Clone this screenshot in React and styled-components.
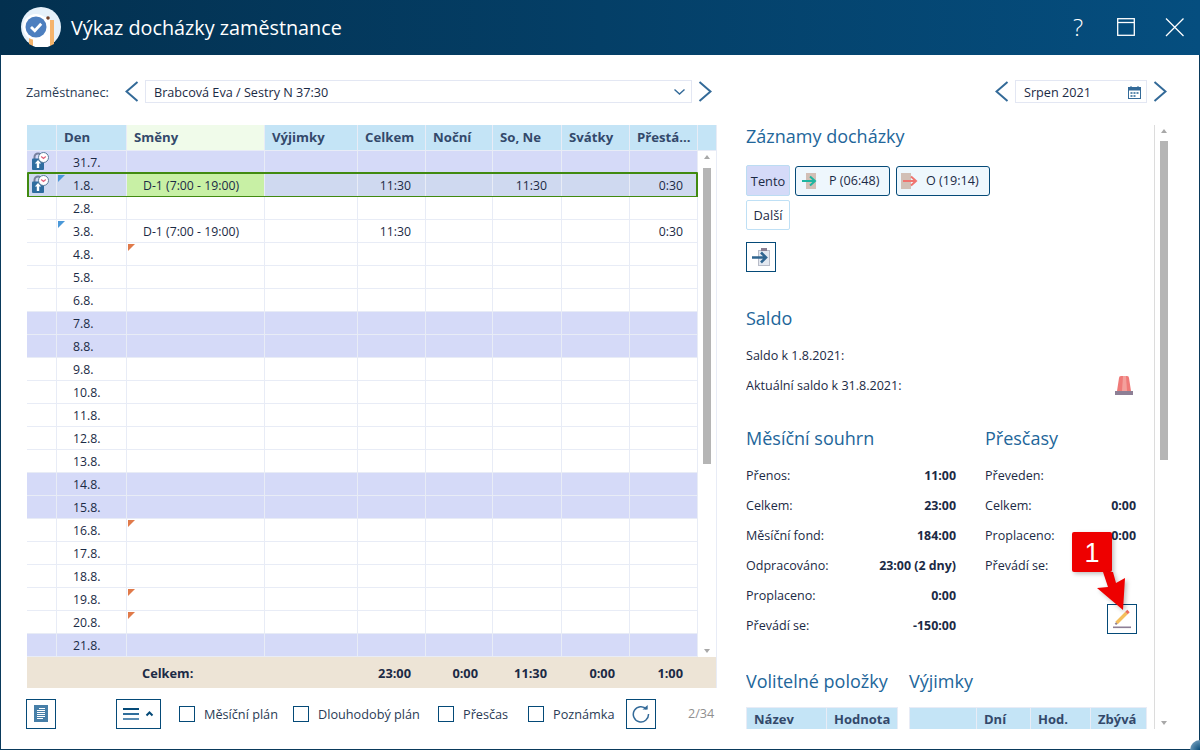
import React from 'react'
import styled, { createGlobalStyle } from 'styled-components'

const GlobalStyle = createGlobalStyle`
    html, body { margin: 0; padding: 0; background: white; }
    * { box-sizing: border-box; }
    body { font-family: "Open Sans", "Liberation Sans", sans-serif; color: #1b2a45; font-size: 12.6px; }
`;

const COLS = '30px 70px 138px 93px 68px 67px 69px 68px 68px';

const Window = styled.div`
    position: relative;
    width: 1200px;
    height: 750px;
    display: flex;
    flex-direction: column;
    overflow: hidden;
`;
const Header = styled.header`
    height: 55px;
    flex: none;
    display: flex;
    align-items: center;
    padding: 0 14px 1px 21px;
    background: linear-gradient(90deg, #03304f 0%, #054e7f 100%);
    color: white;
`;
const Title = styled.h1`
    margin: 0 auto 0 10px;
    font-size: 19.8px;
    font-weight: 400;
`;
const HeaderIcon = styled.span`
    width: 24px;
    margin-left: 24px;
    display: flex;
    justify-content: center;
    font-size: 24px;
    font-weight: 300;
    line-height: 24px;
`;
const Content = styled.main`
    flex: 1;
    display: flex;
    padding: 25px 0 0 25px;
    border: solid #0a3a5c;
    border-width: 0 1px 1px 1px;
    min-height: 0;
`;
const LeftCol = styled.section`
    width: 691px;
    flex: none;
`;
const RightCol = styled.section`
    width: 426px;
    margin-left: 29px;
    flex: none;
`;
const Toolbar = styled.div`
    height: 23px;
    margin-bottom: 22px;
    display: flex;
    align-items: center;
    justify-content: ${p => p.$end ? 'flex-end' : 'flex-start'};
    padding-right: 4px;
`;
const FieldLabel = styled.span`
    width: 98px;
    color: #2a3b55;
    font-size: 12.7px;
`;
const NavButton = styled.span`
    width: 16px;
    height: 23px;
    flex: none;
    display: flex;
    align-items: center;
    justify-content: center;
    margin: ${p => p.$margin || '0'};
`;
const Select = styled.div`
    flex: ${p => p.$width ? 'none' : '1'};
    width: ${p => p.$width ? p.$width + 'px' : 'auto'};
    height: 23px;
    display: flex;
    align-items: center;
    justify-content: space-between;
    margin-left: 5px;
    padding: 1px 5px 0 8px;
    border: 1px solid #e3e7f3;
    font-size: 12.65px;
`;
const Table = styled.div`
    margin-left: 1px;
    width: 690px;
    border: solid #e8ecf6;
    border-width: 0 1px 0 0;
`;
const HeadRow = styled.div`
    display: grid;
    grid-template-columns: ${COLS} 1fr;
    height: 26px;
    border-bottom: 1px solid #e8ecf6;
    background: #c4e4f6;
`;
const HeadCell = styled.div`
    padding-left: 7px;
    line-height: 24px;
    font-size: 13.2px;
    font-weight: 700;
    color: #33496b;
    white-space: nowrap;
    border-right: 1px solid #e8ecf6;
    background: ${p => p.$active ? '#f0fbea' : 'transparent'};
    &:last-child { border-right: none; }
`;
const TableBody = styled.div`
    display: flex;
    height: 506px;
`;
const Rows = styled.div`
    width: 671px;
    flex: none;
`;
const Row = styled.div`
    position: relative;
    display: grid;
    grid-template-columns: ${COLS};
    height: 23px;
    background: ${p => p.$selected ? '#cfd9f0' : p.$weekend ? '#d5daf8' : 'white'};
    &::after {
        content: '';
        display: ${p => p.$selected ? 'block' : 'none'};
        position: absolute;
        inset: -2px 0 -1px 0;
        border: 2px solid #418a10;
        border-radius: 1px;
        pointer-events: none;
    }
`;
const Cell = styled.div`
    position: relative;
    display: flex;
    align-items: center;
    height: 23px;
    justify-content: ${p => p.$right ? 'flex-end' : 'flex-start'};
    padding: ${p => p.$right ? '0 14px 0 0' : `0 0 0 ${p.$pad || 16}px`};
    font-size: 12.25px;
    border-right: 1px solid #e8ecf6;
    border-bottom: 1px solid #e8ecf6;
    background: ${p => p.$shift ? '#c8f0a5' : 'transparent'};
    &::before {
        content: '';
        display: ${p => p.$flag ? 'block' : 'none'};
        position: absolute;
        left: 1px;
        top: 1px;
        border-style: solid;
        border-width: 7px 7px 0 0;
        border-color: ${p => p.$flag === 'blue' ? '#4a98d8' : '#e07a4a'} transparent transparent transparent;
    }
`;
const Scrollbar = styled.div`
    flex: 1;
    height: 100%;
    display: flex;
    flex-direction: column;
    align-items: center;
    padding: 4px 0;
`;
const ScrollArrow = styled.span`
    width: 0;
    height: 0;
    flex: none;
    border-left: 3.5px solid transparent;
    border-right: 3.5px solid transparent;
    border-${p => p.$down ? 'top' : 'bottom'}: 4px solid #a8a8a8;
`;
const ScrollThumb = styled.span`
    width: 8px;
    height: ${p => p.$height}px;
    flex: none;
    margin-top: ${p => p.$top}px;
    margin-bottom: auto;
    background: #b5b5b5;
`;
const FootRow = styled.div`
    display: grid;
    grid-template-columns: ${COLS} 1fr;
    height: 31px;
    background: #ede4d6;
    font-size: 12.8px;
    font-weight: 700;
    line-height: 33px;
`;
const FootCell = styled.div`
    text-align: ${p => p.$left ? 'left' : 'right'};
    padding: ${p => p.$left ? '0 0 0 15px' : '0 15px 0 0'};
`;
const BottomBar = styled.div`
    height: 29px;
    margin-top: 11px;
    display: flex;
    align-items: center;
`;
const IconButton = styled.button`
    width: ${p => p.$width || 30}px;
    height: 30px;
    flex: none;
    display: inline-flex;
    align-items: center;
    justify-content: center;
    padding: 0;
    margin: ${p => p.$margin || '0'};
    background: white;
    border: 1px solid #054a78;
`;
const CheckItem = styled.label`
    width: ${p => p.$width}px;
    flex: none;
    display: flex;
    align-items: center;
    gap: 9px;
    color: #2a3b55;
    font-size: 12.7px;
    white-space: nowrap;
`;
const CheckBox = styled.span`
    width: 16px;
    height: 16px;
    flex: none;
    border: 1px solid #054a78;
`;
const PageCount = styled.span`
    margin-left: 32px;
    color: #8f8f8f;
    font-size: 12.6px;
`;
const Panel = styled.div`
    display: flex;
    height: 604px;
    overflow: hidden;
`;
const PanelInner = styled.div`
    width: 409px;
    flex: none;
    border-right: 1px solid #dcdcdc;
`;
const Heading = styled.h2`
    margin: ${p => p.$top || 0}px 0 ${p => p.$bottom || 10}px;
    height: 24px;
    font-size: 18px;
    line-height: 24px;
    font-weight: 400;
    color: #22669a;
    white-space: nowrap;
`;
const TightHeading = styled(Heading)`
    line-height: 22px;
`;
const Buttons = styled.div`
    width: 250px;
    margin-top: 16px;
    display: flex;
    flex-wrap: wrap;
    align-items: center;
    gap: 4px 5px;
`;
const TabButton = styled.button`
    width: 44px;
    height: ${p => p.$active ? 31 : 30}px;
    padding: 0;
    font: inherit;
    font-size: 12.8px;
    color: #1b2a45;
    border-radius: 2px;
    border: 1px solid ${p => p.$active ? '#bcdcf2' : '#bfe0f5'};
    background: ${p => p.$active ? '#d5daf8' : 'white'};
`;
const RecordButton = styled.button`
    width: ${p => p.$width}px;
    height: 30px;
    display: flex;
    align-items: center;
    gap: ${p => p.$gap}px;
    padding: 0 0 0 4px;
    margin-left: ${p => p.$margin || 0}px;
    font: inherit;
    font-size: 12.6px;
    color: #1b2a45;
    border-radius: 3px;
    border: 1px solid #054a78;
    background: #eef7fd;
`;
const InfoRow = styled.div`
    height: 30px;
    display: flex;
    align-items: center;
    justify-content: space-between;
    font-size: 12.55px;
    padding-right: ${p => p.$pad || 0}px;
`;
const Value = styled.b`
    font-weight: 700;
    font-size: 12.4px;
`;
const SaldoBlock = styled.div`
    width: 390px;
`;
const Columns = styled.div`
    display: grid;
    grid-template-columns: ${p => p.$cols};
    column-gap: ${p => p.$gap}px;
`;
const RightAligned = styled.div`
    display: flex;
    justify-content: flex-end;
    margin: 24px -1px 0 0;
`;
const MiniTable = styled.div`
    display: grid;
    grid-template-columns: ${p => p.$cols};
    height: 22px;
    padding: 1px 1px 0;
    column-gap: 1px;
    background: #e8ecf6;
`;
const MiniHead = styled.div`
    background: #c4e4f6;
    color: #33496b;
    font-size: 13px;
    font-weight: 700;
    line-height: 22px;
    padding-left: ${p => p.$pad || 7}px;
`;
const Badge = styled.div`
    position: absolute;
    left: 1072px;
    top: 532px;
    width: 40px;
    height: 40px;
    display: flex;
    align-items: center;
    justify-content: center;
    padding-top: 2px;
    border-radius: 2px;
    background: #ee0000;
    color: white;
    font-family: "Liberation Sans", sans-serif;
    font-size: 27px;
    box-shadow: 2px 2px 4px rgba(0, 0, 0, 0.25);
`;
const BadgeArrow = styled.svg`
    position: absolute;
    left: 1095px;
    top: 570px;
    filter: drop-shadow(2px 2px 2px rgba(0, 0, 0, 0.25));
`;
const Corner = styled.div`
    position: absolute;
    right: -10px;
    bottom: -10px;
    width: 20px;
    height: 20px;
    border-radius: 50%;
    background: radial-gradient(circle, #054a78 0%, #8fb4cf 100%);
`;
const LockSvg = styled.svg`
    margin-bottom: 3px;
`;

const Chevron = ({ right }) => (
    <svg width="14" height="21" viewBox="0 0 14 21" fill="none">
        <path d={right ? 'M1.5 1l11 9.5-11 9.5' : 'M12.5 1L1.5 10.5l11 9.5'} stroke="#336a98" strokeWidth="2" />
    </svg>
)

const Logo = () => (
    <svg width="40" height="40" viewBox="0 0 40 40">
        <circle cx="20" cy="20" r="20" fill="#e6f1fa" />
        <path d="M8 28h4v11l-4-2zM29 13h4v24l-4 2z" fill="#f5b46c" />
        <path d="M12 39V10h17v29a20 20 0 0 1-17 0z" fill="white" />
        <circle cx="27" cy="11" r="1.8" fill="#70402a" />
        <circle cx="15" cy="20" r="13" fill="white" />
        <circle cx="15" cy="20" r="10.5" fill="#4d7fbf" />
        <path d="M10 20l3.8 3.8 6.4-7" fill="none" stroke="white" strokeWidth="2.8" />
    </svg>
)

const LockClock = () => (
    <LockSvg width="17" height="18" viewBox="0 0 17 18">
        <path d="M2.5 7V5a3.5 3.5 0 0 1 7 0v2" fill="none" stroke="#77809e" strokeWidth="2" />
        <rect x="0" y="6.5" width="12" height="11.5" rx="1" fill="#2f6da0" />
        <path d="M6 8l3.2 3.4H7.2V16H4.8v-4.6H2.8z" fill="white" />
        <circle cx="11.5" cy="5.5" r="5" fill="white" stroke="#5a7d9c" />
        <path d="M9.2 4.5l2.3 2 2.3-2" fill="none" stroke="#e0607a" strokeWidth="1.2" />
    </LockSvg>
)

const EntryArrow = ({ color, offset }) => (
    <svg width="24" height="18" viewBox="0 0 24 18">
        <rect x={offset} y="1" width="10" height="16" fill="#d2bfb6" />
        <path d="M2 9h13M10 4.5L15 9l-5 4.5" fill="none" stroke={color} strokeWidth="2" />
    </svg>
)

const ImportIcon = () => (
    <svg width="20" height="20" viewBox="0 0 20 20">
        <rect x="7.5" y="3.5" width="11" height="15" fill="#e3e8f0" stroke="#b8bcc8" />
        <rect x="10" y="1" width="6" height="3" fill="#8a7f92" />
        <path d="M1 10.5h14M10 5.5l5 5-5 5" fill="none" stroke="#2f6590" strokeWidth="2.6" />
    </svg>
)

const Siren = () => (
    <svg width="18" height="19" viewBox="0 0 18 19">
        <path d="M4 2q0-2 2-2h6q2 0 2 2l2 13H2z" fill="#ef7a78" />
        <path d="M8 0h3l1 15H7z" fill="#f4a09c" />
        <rect y="15" width="18" height="4" fill="#8d7f95" />
    </svg>
)

const Pencil = () => (
    <svg width="20" height="20" viewBox="0 0 20 20" fill="none">
        <path d="M4.5 14l10-10" stroke="#f5bf5c" strokeWidth="3.4" />
        <path d="M14.5 4l2-2" stroke="#ee6d5a" strokeWidth="3.4" />
        <path d="M3.4 15.4l1.4-1.4" stroke="#8d7f95" strokeWidth="2" />
        <rect x="1" y="17.5" width="18" height="1.6" fill="#8d7f95" />
    </svg>
)

const DocIcon = () => (
    <svg width="14" height="17" viewBox="0 0 14 17">
        <rect width="14" height="17" fill="#477fa8" />
        <path d="M5 3.5h6M3 5.5h8M3 7.5h8M3 9.5h8M3 11.5h8M3 13.5h6" stroke="white" />
    </svg>
)

const MenuIcon = () => (
    <svg width="31" height="12" viewBox="0 0 31 12">
        <path d="M0 1h16" stroke="#054a78" strokeWidth="2" />
        <path d="M0 6h16" stroke="#2f6e9c" strokeWidth="2" />
        <path d="M0 11h16" stroke="#5a8cb2" strokeWidth="2" />
        <path d="M23.5 7.5l3-3 3 3" fill="none" stroke="#054a78" strokeWidth="2" />
    </svg>
)

const Refresh = () => (
    <svg width="18" height="18" viewBox="0 0 18 18" fill="none">
        <path d="M14.5 4.2A7.6 7.6 0 1 0 16.5 9" stroke="#336a98" strokeWidth="1.5" />
        <path d="M10.5 4.5h5.2V0z" fill="#336a98" />
    </svg>
)

const Calendar = () => (
    <svg width="13" height="13" viewBox="0 0 13 13">
        <rect x="0.5" y="1.5" width="12" height="11" fill="none" stroke="#336a98" />
        <rect x="0.5" y="1.5" width="12" height="3" fill="#336a98" />
        <path d="M3 0v2M10 0v2" stroke="#336a98" />
        <path d="M2.5 6h2v2h-2zM5.5 6h2v2h-2zM8.5 6h2v2h-2zM2.5 9h2v2h-2zM5.5 9h2v2h-2z" fill="#5d8bad" />
    </svg>
)

const days = [
    { day: '31.7.', weekend: true, lock: true },
    { day: '1.8.', weekend: true, lock: true, selected: true, dayFlag: 'blue', shift: 'D-1 (7:00 - 19:00)', total: '11:30', sat: '11:30', over: '0:30' },
    { day: '2.8.' },
    { day: '3.8.', dayFlag: 'blue', plain: 'D-1 (7:00 - 19:00)', total: '11:30', over: '0:30' },
    { day: '4.8.', shiftFlag: 'orange' },
    { day: '5.8.' },
    { day: '6.8.' },
    { day: '7.8.', weekend: true },
    { day: '8.8.', weekend: true },
    { day: '9.8.' },
    { day: '10.8.' },
    { day: '11.8.' },
    { day: '12.8.' },
    { day: '13.8.' },
    { day: '14.8.', weekend: true },
    { day: '15.8.', weekend: true },
    { day: '16.8.', shiftFlag: 'orange' },
    { day: '17.8.' },
    { day: '18.8.' },
    { day: '19.8.', shiftFlag: 'orange' },
    { day: '20.8.', shiftFlag: 'orange' },
    { day: '21.8.', weekend: true },
];

const monthly = [
    ['Přenos:', '11:00'],
    ['Celkem:', '23:00'],
    ['Měsíční fond:', '184:00'],
    ['Odpracováno:', '23:00 (2 dny)'],
    ['Proplaceno:', '0:00'],
    ['Převádí se:', '-150:00'],
];
const overtime = [
    ['Převeden:', ''],
    ['Celkem:', '0:00'],
    ['Proplaceno:', '0:00'],
    ['Převádí se:', ''],
];

export default function App() {
    return (
        <Window>
            <GlobalStyle />
            <Header>
                <Logo />
                <Title>Výkaz docházky zaměstnance</Title>
                <HeaderIcon>?</HeaderIcon>
                <HeaderIcon>
                    <svg width="18" height="18" viewBox="0 0 18 18" fill="none" stroke="white" strokeWidth="1.3">
                        <rect x="0.7" y="0.7" width="16.6" height="16.6" />
                        <path d="M1 4.5h16" />
                    </svg>
                </HeaderIcon>
                <HeaderIcon>
                    <svg width="20" height="20" viewBox="0 0 20 20" fill="none" stroke="white" strokeWidth="1.3">
                        <path d="M2 1.5l17.5 17.5M19.5 1.5L2 19" />
                    </svg>
                </HeaderIcon>
            </Header>
            <Content>
                <LeftCol>
                    <Toolbar>
                        <FieldLabel>Zaměstnanec:</FieldLabel>
                        <NavButton><Chevron /></NavButton>
                        <Select>
                            Brabcová Eva / Sestry N 37:30
                            <svg width="14" height="8" viewBox="0 0 14 8" fill="none">
                                <path d="M2.5 1.5l5 4.5 5-4.5" stroke="#336a98" strokeWidth="1.4" />
                            </svg>
                        </Select>
                        <NavButton $margin="0 0 0 5px"><Chevron right /></NavButton>
                    </Toolbar>
                    <Table>
                        <HeadRow>
                            <HeadCell />
                            <HeadCell>Den</HeadCell>
                            <HeadCell $active>Směny</HeadCell>
                            <HeadCell>Výjimky</HeadCell>
                            <HeadCell>Celkem</HeadCell>
                            <HeadCell>Noční</HeadCell>
                            <HeadCell>So, Ne</HeadCell>
                            <HeadCell>Svátky</HeadCell>
                            <HeadCell>Přestá...</HeadCell>
                            <HeadCell />
                        </HeadRow>
                        <TableBody>
                            <Rows>
                                {days.map(d => (
                                    <Row key={d.day} $weekend={d.weekend} $selected={d.selected}>
                                        <Cell $pad={5}>{d.lock && <LockClock />}</Cell>
                                        <Cell $flag={d.dayFlag}>{d.day}</Cell>
                                        <Cell $shift={!!d.shift} $flag={d.shiftFlag}>{d.shift || d.plain}</Cell>
                                        <Cell />
                                        <Cell $right>{d.total}</Cell>
                                        <Cell />
                                        <Cell $right>{d.sat}</Cell>
                                        <Cell />
                                        <Cell $right>{d.over}</Cell>
                                    </Row>
                                ))}
                            </Rows>
                            <Scrollbar>
                                <ScrollArrow />
                                <ScrollThumb $top={9} $height={296} />
                                <ScrollArrow $down />
                            </Scrollbar>
                        </TableBody>
                        <FootRow>
                            <FootCell />
                            <FootCell />
                            <FootCell $left>Celkem:</FootCell>
                            <FootCell />
                            <FootCell>23:00</FootCell>
                            <FootCell>0:00</FootCell>
                            <FootCell>11:30</FootCell>
                            <FootCell>0:00</FootCell>
                            <FootCell>1:00</FootCell>
                            <FootCell />
                        </FootRow>
                    </Table>
                    <BottomBar>
                        <IconButton><DocIcon /></IconButton>
                        <IconButton $width={45} $margin="0 18px 0 60px"><MenuIcon /></IconButton>
                        <CheckItem $width={114}><CheckBox />Měsíční plán</CheckItem>
                        <CheckItem $width={145}><CheckBox />Dlouhodobý plán</CheckItem>
                        <CheckItem $width={90}><CheckBox />Přesčas</CheckItem>
                        <CheckItem $width={98}><CheckBox />Poznámka</CheckItem>
                        <IconButton><Refresh /></IconButton>
                        <PageCount>2/34</PageCount>
                    </BottomBar>
                </LeftCol>
                <RightCol>
                    <Toolbar $end>
                        <NavButton><Chevron /></NavButton>
                        <Select $width={132}>
                            Srpen 2021
                            <Calendar />
                        </Select>
                        <NavButton $margin="0 0 0 5px"><Chevron right /></NavButton>
                    </Toolbar>
                    <Panel>
                        <PanelInner>
                            <TightHeading $bottom={0}>Záznamy docházky</TightHeading>
                            <Buttons>
                                <TabButton $active>Tento</TabButton>
                                <RecordButton $width={95} $gap={5}><EntryArrow color="#1fb5a0" offset={6} />P (06:48)</RecordButton>
                                <RecordButton $width={94} $margin={1} $gap={1}><EntryArrow color="#f07470" offset={0} />O (19:14)</RecordButton>
                                <TabButton>Další</TabButton>
                            </Buttons>
                            <IconButton $margin="12px 0 0"><ImportIcon /></IconButton>
                            <TightHeading $top={35} $bottom={9}>Saldo</TightHeading>
                            <SaldoBlock>
                                <InfoRow>Saldo k 1.8.2021:</InfoRow>
                                <InfoRow $pad={3}>Aktuální saldo k 31.8.2021:<Siren /></InfoRow>
                            </SaldoBlock>
                            <Columns $cols="210px 151px" $gap={29}>
                                <div>
                                    <Heading $top={26}>Měsíční souhrn</Heading>
                                    {monthly.map(([label, value]) => (
                                        <InfoRow key={label}>{label}<Value>{value}</Value></InfoRow>
                                    ))}
                                </div>
                                <div>
                                    <Heading $top={26}>Přesčasy</Heading>
                                    {overtime.map(([label, value]) => (
                                        <InfoRow key={label}>{label}<Value>{value}</Value></InfoRow>
                                    ))}
                                    <RightAligned>
                                        <IconButton><Pencil /></IconButton>
                                    </RightAligned>
                                </div>
                            </Columns>
                            <Columns $cols="152px 238px" $gap={11}>
                                <div>
                                    <Heading $top={29} $bottom={14}>Volitelné položky</Heading>
                                    <MiniTable $cols="79px 1fr">
                                        <MiniHead>Název</MiniHead>
                                        <MiniHead>Hodnota</MiniHead>
                                    </MiniTable>
                                </div>
                                <div>
                                    <Heading $top={29} $bottom={14}>Výjimky</Heading>
                                    <MiniTable $cols="66px 53px 59px 1fr">
                                        <MiniHead />
                                        <MiniHead>Dní</MiniHead>
                                        <MiniHead>Hod.</MiniHead>
                                        <MiniHead>Zbývá</MiniHead>
                                    </MiniTable>
                                </div>
                            </Columns>
                        </PanelInner>
                        <Scrollbar>
                            <ScrollArrow />
                            <ScrollThumb $top={8} $height={319} />
                            <ScrollArrow $down />
                        </Scrollbar>
                    </Panel>
                </RightCol>
            </Content>
            <Badge>1</Badge>
            <BadgeArrow width="32" height="42" viewBox="0 0 32 42">
                <path d="M8 2h10l3 11 9-5-2 32L2 18l11-1z" fill="#ee0000" />
            </BadgeArrow>
            <Corner />
        </Window>
    )
}
